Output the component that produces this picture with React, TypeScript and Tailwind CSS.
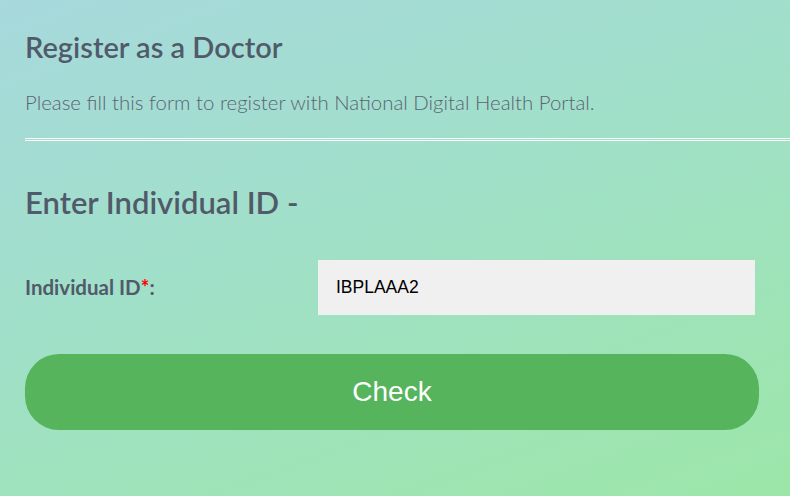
import React from "react";

export default function App() {
  return (
    <div
      className="w-[790px] h-[496px] overflow-hidden bg-[linear-gradient(160deg,#a7d9dd_0%,#a0e0c8_45%,#9ce6a8_100%)]"
      style={{ fontFamily: "Lato, 'Open Sans', sans-serif" }}
    >
      <div className="pl-[25px]">
        <h1 className="pt-[30px] text-[29px] leading-[34px] font-semibold text-[#515a69]">
          Register as a Doctor
        </h1>
        <p className="mt-[26px] text-[20.4px] leading-[24px] font-light text-[#5b6472]">
          Please fill this form to register with National Digital Health Portal.
        </p>
        <div className="mt-[24px] h-[3px] border-y border-white" />
        <h2 className="mt-[43px] text-[31px] leading-[36px] font-semibold text-[#515a69]">
          Enter Individual ID -
        </h2>
        <div className="mt-[40px] flex items-center">
          <label className="w-[293px] text-[20.5px] font-bold text-[#515a69]">
            Individual ID<span className="text-[#ff0000]">*</span>:
          </label>
          <div
            className="w-[437px] h-[55px] bg-[#f0f0f0] flex items-center pl-[18px] text-[17.5px] text-black"
            style={{ fontFamily: "'Liberation Sans', Arial, sans-serif" }}
          >
            IBPLAAA2
          </div>
        </div>
        <button
          className="mt-[39px] w-[734px] h-[76px] rounded-[34px] bg-[#55b45c] text-white text-[28px] flex items-center justify-center"
          style={{ fontFamily: "'Liberation Sans', Arial, sans-serif" }}
        >
          Check
        </button>
      </div>
    </div>
  );
}
